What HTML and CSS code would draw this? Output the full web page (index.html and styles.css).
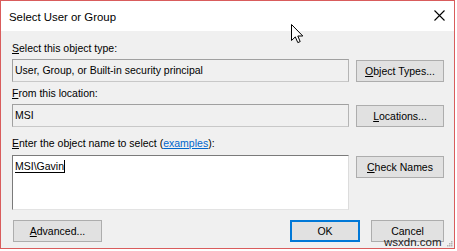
FILE: index.html
```html
<!DOCTYPE html>
<html>
<head>
<meta charset="utf-8">
<link rel="stylesheet" href="styles.css">
</head>
<body>
<div class="window">
  <div class="titlebar">
    <span class="title">Select User or Group</span>
    <svg class="close" width="11" height="11" viewBox="0 0 11 11"><path d="M0.5 0.5 L10.5 10.5 M10.5 0.5 L0.5 10.5" stroke="#000" stroke-width="1.1" fill="none"/></svg>
  </div>
  <div class="content">
    <div class="label"><u>S</u>elect this object type:</div>
    <div class="row">
      <div class="field ro">User, Group, or Built-in security principal</div>
      <div class="btn side"><u>O</u>bject Types...</div>
    </div>
    <div class="label l2"><u>F</u>rom this location:</div>
    <div class="row">
      <div class="field ro">MSI</div>
      <div class="btn side"><u>L</u>ocations...</div>
    </div>
    <div class="label l3"><u>E</u>nter the object name to select (<span class="link">examples</span>):</div>
    <div class="row">
      <div class="field big"><span class="name">MSI\Gavin</span></div>
      <div class="btn side"><u>C</u>heck Names</div>
    </div>
    <div class="footer">
      <div class="btn adv"><u>A</u>dvanced...</div>
      <div class="spacer"></div>
      <div class="btn ok">OK</div>
      <div class="btn cancel">Cancel</div>
    </div>
  </div>
  <svg class="cursor" width="13" height="20" viewBox="0 0 13 20"><path d="M0.5 0.5 L0.5 16.5 L4.3 12.9 L6.8 18.6 L9.2 17.6 L6.8 12 L11.8 12 Z" fill="#fff" stroke="#000" stroke-width="1" stroke-linejoin="miter"/></svg>
  <div class="watermark">wsxdn.com</div>
  <svg class="grip" width="7" height="7" viewBox="0 0 7 7"><g fill="#b4b4b4"><rect x="5" y="1" width="1.5" height="1.5"/><rect x="3" y="3" width="1.5" height="1.5"/><rect x="5" y="3" width="1.5" height="1.5"/><rect x="1" y="5" width="1.5" height="1.5"/><rect x="3" y="5" width="1.5" height="1.5"/><rect x="5" y="5" width="1.5" height="1.5"/></g></svg>
</div>
</body>
</html>
```
FILE: styles.css
```css
html, body {
  margin: 0;
  padding: 0;
  background: #fff;
}
body {
  font-family: "Liberation Sans", Arial, sans-serif;
  font-size: 10.5px;
  color: #000;
}
.window {
  position: relative;
  box-sizing: border-box;
  width: 455px;
  height: 249px;
  border: 1px solid #d95c5c;
  background: #f0f0f0;
  display: flex;
  flex-direction: column;
}
.titlebar {
  height: 30px;
  background: #fff;
  display: flex;
  align-items: center;
  padding-left: 8px;
  padding-right: 8px;
}
.title {
  font-size: 11.4px;
  flex: 1;
  padding-top: 1px;
}
.close {
  display: block;
  margin-right: 1px;
  margin-top: -1px;
}
.content {
  padding: 11px 10px 0 11px;
  display: flex;
  flex-direction: column;
}
.label {
  height: 13px;
  line-height: 13px;
  margin-bottom: 4px;
  white-space: nowrap;
}
.l2 { margin-top: 5px; }
.l3 { margin-top: 10px; margin-bottom: 5px; }
.row {
  display: flex;
  gap: 7px;
  align-items: flex-start;
}
.field {
  box-sizing: border-box;
  flex: 1;
  height: 23px;
  border: 1px solid #a8a8a8;
  padding-left: 2px;
  line-height: 20px;
  white-space: nowrap;
}
.ro {
  background: #f0f0f0;
  border-color: #a0a0a0 #b4b4b4 #c8c8c8 #a0a0a0;
}
.big {
  height: 55px;
  background: #fff;
  border-color: #7a7a7a #dcdcdc #e3e3e3 #7a7a7a;
  line-height: 14px;
  padding-top: 3px;
}
.name {
  display: inline-block;
  border-bottom: 1px solid #000;
  border-right: 1px solid #000;
  line-height: 12px;
  padding-right: 0;
}
.btn {
  box-sizing: border-box;
  height: 22px;
  background: #e1e1e1;
  border: 1px solid #adadad;
  text-align: center;
  line-height: 20px;
  white-space: nowrap;
}
.side {
  width: 88px;
  margin-top: 1px;
}
.link {
  color: #0066cc;
  text-decoration: underline;
}
.footer {
  display: flex;
  margin-top: 10px;
  gap: 11px;
}
.spacer { flex: 1; }
.adv {
  width: 89px;
  margin-left: 1px;
}
.ok {
  width: 70px;
  border: 2px solid #0078d7;
  line-height: 18px;
}
.cancel {
  width: 73px;
}
.cursor {
  position: absolute;
  left: 290px;
  top: 23px;
}
.watermark {
  position: absolute;
  left: 383px;
  top: 235px;
  font-size: 11.5px;
  line-height: 13px;
  color: #222;
}
.grip {
  position: absolute;
  left: 445px;
  top: 239px;
}
```
